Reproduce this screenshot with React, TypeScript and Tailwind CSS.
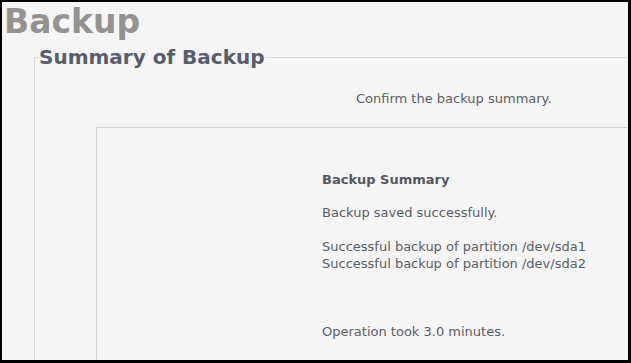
import React from "react";

export default function App() {
  return (
    <div className="w-[631px] h-[363px] overflow-hidden border-black border-t-2 border-l-2 border-r-[3px] border-b-[3px] bg-[#f5f5f5] font-['DejaVu_Sans',sans-serif]">
      {/* Page title */}
      <h1 className="pl-[2px] mt-px text-[33px] leading-[37px] font-bold text-[#949391]">
        Backup
      </h1>

      {/* Summary fieldset */}
      <fieldset className="ml-[32px] mt-[6px] w-[593px] h-[400px] border border-[#dadada] border-r-[#ebebeb]">
        <legend className="ml-[4px] text-[20px] leading-[23px] font-bold text-[#585d6b]">
          Summary of Backup
        </legend>

        <p className="mt-[22px] ml-[321px] text-[13px] leading-[15px] text-[#5b5e65] whitespace-nowrap">
          Confirm the backup summary.
        </p>

        <div className="mt-[21px] ml-[61px] w-[560px] h-[300px] border border-[#d4d4d4] pt-[43px] pl-[225px] text-[13px] leading-[17px] text-[#5b5e65] whitespace-nowrap">
          <h3 className="font-bold text-[#55585f] mb-[16px]">Backup Summary</h3>
          <p className="mb-[17px]">Backup saved successfully.</p>
          <p>Successful backup of partition /dev/sda1</p>
          <p className="mb-[51px]">Successful backup of partition /dev/sda2</p>
          <p>Operation took 3.0 minutes.</p>
        </div>
      </fieldset>
    </div>
  );
}
